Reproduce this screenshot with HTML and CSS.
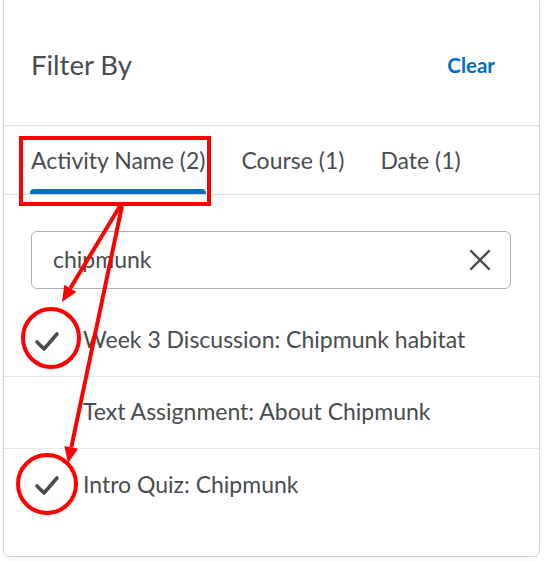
FILE: index.html
```html
<!DOCTYPE html>
<html lang="en">
<head>
<meta charset="utf-8">
<title>Filter By</title>
<link rel="stylesheet" href="styles.css">
</head>
<body>
<div class="panel">
  <div class="header">
    <h2 class="title">Filter By</h2>
    <button class="clear">Clear</button>
  </div>
  <div class="tabs">
    <div class="tab active">Activity Name (2)</div>
    <div class="tab">Course (1)</div>
    <div class="tab">Date (1)</div>
  </div>
  <div class="search">
    <span class="search-text">chipmunk</span>
    <svg class="x-icon" width="22" height="22" viewBox="0 0 22 22"><path d="M2 2 L20 20 M20 2 L2 20" stroke="#494c4e" stroke-width="2.4" stroke-linecap="round" fill="none"/></svg>
  </div>
  <ul class="list">
    <li class="row"><span class="check"><svg width="26" height="22" viewBox="0 0 26 22"><path d="M3 12 L10 19 L23 4" stroke="#494c4e" stroke-width="3.6" stroke-linecap="round" stroke-linejoin="round" fill="none"/></svg></span><span class="label">Week 3 Discussion: Chipmunk habitat</span></li>
    <li class="row"><span class="check"></span><span class="label">Text Assignment: About Chipmunk</span></li>
    <li class="row"><span class="check"><svg width="26" height="22" viewBox="0 0 26 22"><path d="M3 12 L10 19 L23 4" stroke="#494c4e" stroke-width="3.6" stroke-linecap="round" stroke-linejoin="round" fill="none"/></svg></span><span class="label">Intro Quiz: Chipmunk</span></li>
  </ul>
</div>
<svg class="annot" width="544" height="561" viewBox="0 0 544 561">
  <rect x="21" y="138" width="188" height="66" fill="none" stroke="#f00" stroke-width="4"/>
  <ellipse cx="51" cy="338" rx="28" ry="29" fill="none" stroke="#f00" stroke-width="4"/>
  <ellipse cx="47" cy="484" rx="29" ry="29" fill="none" stroke="#f00" stroke-width="4"/>
  <line x1="120" y1="206" x2="70.3" y2="288.3" stroke="#f00" stroke-width="4"/>
  <polygon points="62,302 76.3,291.9 64.3,284.7" fill="#f00"/>
  <line x1="122" y1="206" x2="71.3" y2="447.3" stroke="#f00" stroke-width="4"/>
  <polygon points="68,463 78.1,448.7 64.4,445.9" fill="#f00"/>
</svg>
</body>
</html>
```
FILE: styles.css
```css
* { box-sizing: border-box; }
html, body { margin: 0; padding: 0; background: #fff; }
body {
  width: 544px;
  height: 561px;
  overflow: hidden;
  position: relative;
  font-family: Lato, "Noto Sans", sans-serif;
  color: #494c4e;
}
.panel {
  margin-left: 3px;
  margin-top: -6px;
  width: 537px;
  height: 563px;
  border: 1px solid #cdd3da;
  border-radius: 7px;
  background: #fff;
  box-shadow: 0 2px 4px rgba(0,0,0,0.05);
}
.header {
  height: 131px;
  display: flex;
  align-items: center;
  justify-content: space-between;
  padding: 8px 44px 0 27px;
  border-bottom: 1px solid #d6dce3;
}
.title {
  margin: 0;
  font-size: 27.5px;
  font-weight: 400;
  color: #494c4e;
}
.clear {
  border: 0;
  background: none;
  padding: 0;
  margin-top: 2px;
  font-family: inherit;
  font-size: 20.5px;
  font-weight: 700;
  color: #006fbf;
}
.tabs {
  display: flex;
  gap: 36px;
  height: 69px;
  padding: 0 0 0 27px;
  border-bottom: 1px solid #d6dce3;
}
.tab {
  font-size: 23px;
  line-height: 23px;
  padding-top: 23px;
  position: relative;
}
.tab.active::after {
  content: "";
  position: absolute;
  left: -1px;
  right: -1px;
  bottom: 0;
  height: 5px;
  background: #006fbf;
  border-radius: 4px 4px 0 0;
}
.search {
  margin: 36px 0 0 27px;
  width: 480px;
  height: 58px;
  border: 1px solid #a9afb5;
  border-radius: 6px;
  display: flex;
  align-items: center;
  justify-content: space-between;
  padding: 0 19px 0 21px;
}
.search-text { font-size: 23px; margin-top: -3px; }
.list {
  list-style: none;
  margin: 16px 0 0;
  padding: 0;
}
.row {
  height: 72px;
  display: flex;
  align-items: center;
  border-bottom: 1px solid #e3e9f1;
  padding-left: 30px;
}
.row:last-child { border-bottom: 0; }
.check {
  width: 49px;
  height: 22px;
  display: flex;
  align-items: center;
}
.label { font-size: 23px; margin-top: -3px; }
.annot {
  position: absolute;
  left: 0;
  top: 0;
  pointer-events: none;
}
```
